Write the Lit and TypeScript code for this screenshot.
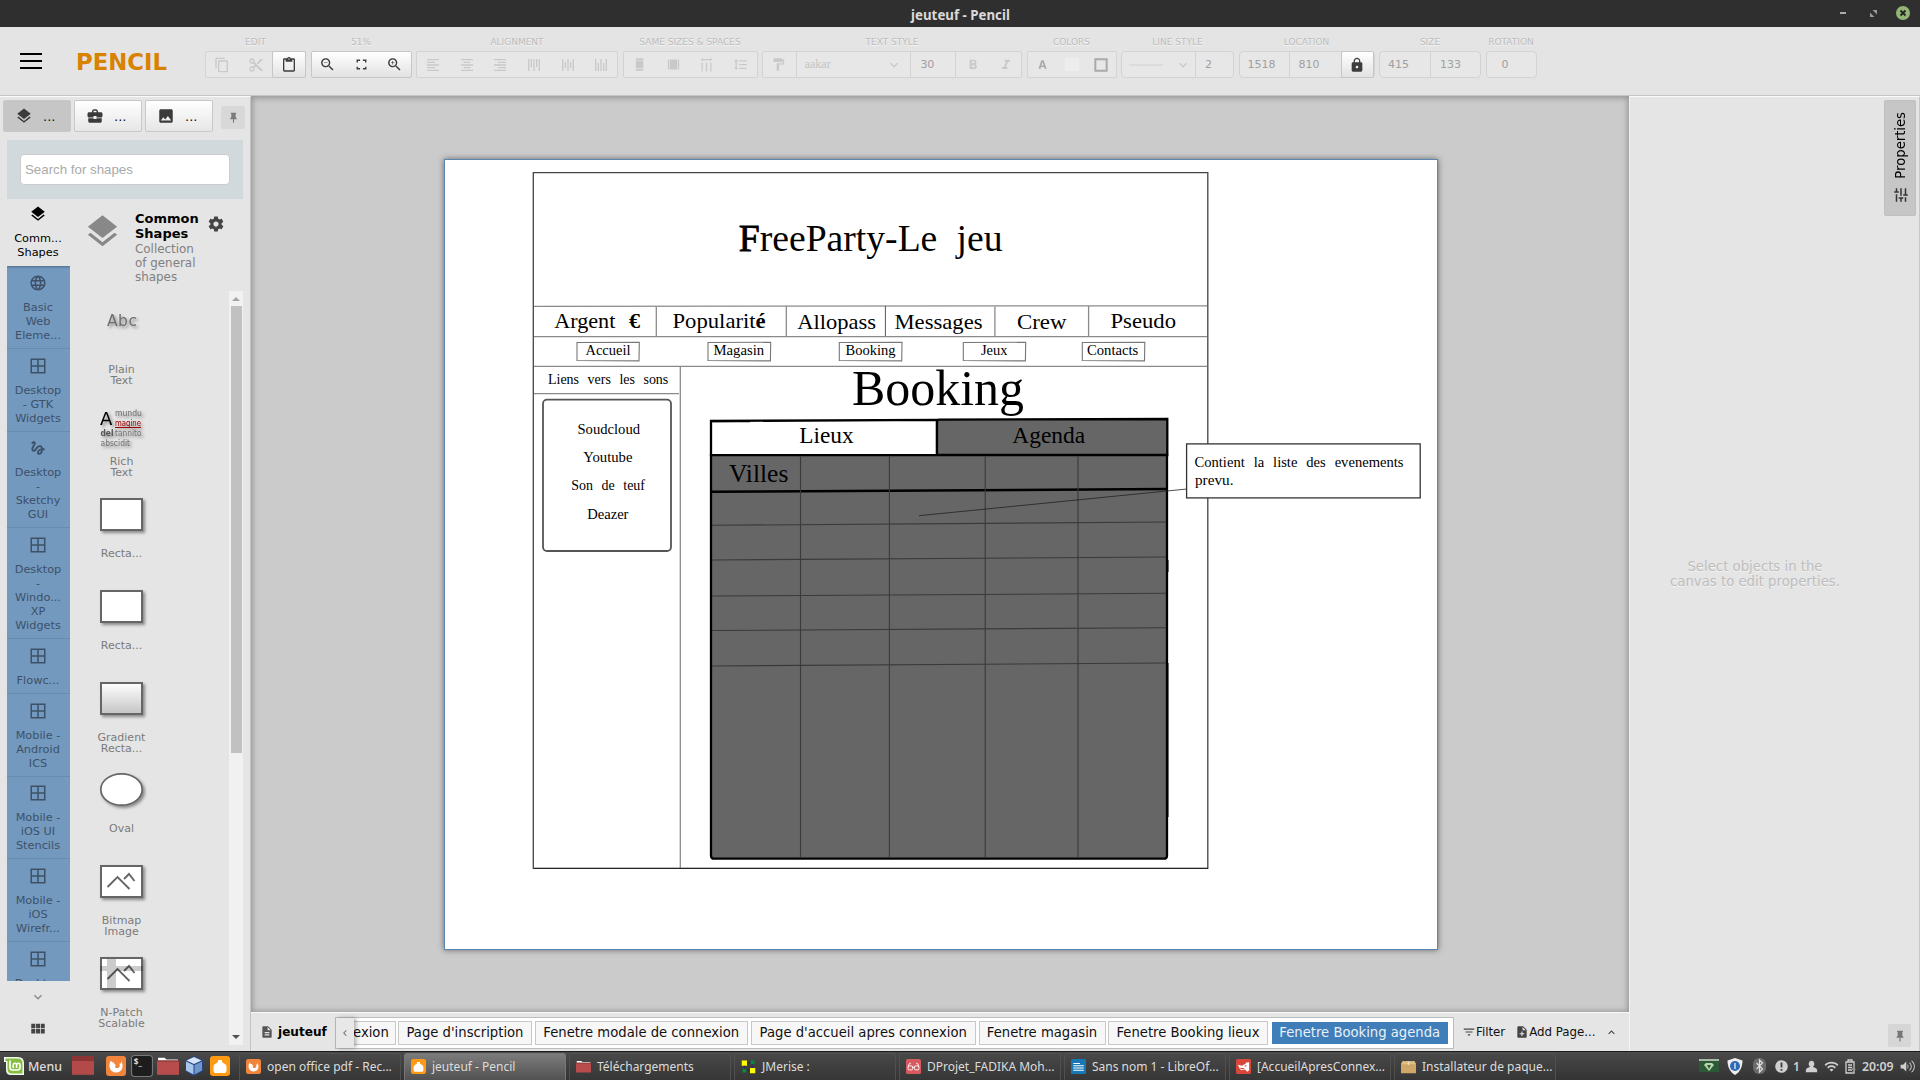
import { LitElement, html, svg, css } from "lit";
import { customElement } from "lit/decorators.js";

const P: Record<string, string> = {
  layers: "M11.99 18.54l-7.37-5.73L3 14.07l9 7 9-7-1.63-1.27-7.38 5.74zM12 16l7.36-5.73L21 9l-9-7-9 7 1.63 1.27L12 16z",
  copy: "M16 1H4c-1.1 0-2 .9-2 2v14h2V3h12V1zm3 4H8c-1.1 0-2 .9-2 2v14c0 1.1.9 2 2 2h11c1.1 0 2-.9 2-2V7c0-1.1-.9-2-2-2zm0 16H8V7h11v14z",
  cut: "M9.64 7.64c.23-.5.36-1.05.36-1.64 0-2.21-1.79-4-4-4S2 3.79 2 6s1.79 4 4 4c.59 0 1.14-.13 1.64-.36L10 12l-2.36 2.36C7.14 14.13 6.59 14 6 14c-2.21 0-4 1.79-4 4s1.79 4 4 4 4-1.79 4-4c0-.59-.13-1.14-.36-1.64L12 14l7 7h3v-1L9.64 7.64zM6 8c-1.1 0-2-.89-2-2s.9-2 2-2 2 .89 2 2-.9 2-2 2zm0 12c-1.1 0-2-.89-2-2s.9-2 2-2 2 .89 2 2-.9 2-2 2zm6-7.500c-.28 0-.5-.22-.5-.5s.22-.5.5-.5.5.22.5.5-.22.5-.5.5zM19 3l-6 6 2 2 7-7V3z",
  paste: "M19 2h-4.18C14.400.84 13.300 0 12 0c-1.300 0-2.400.84-2.820 2H5c-1.100 0-2 .9-2 2v16c0 1.100.9 2 2 2h14c1.100 0 2-.9 2-2V4c0-1.100-.9-2-2-2zm-7 0c.55 0 1 .45 1 1s-.45 1-1 1-1-.45-1-1 .45-1 1-1zm7 18H5V4h2v3h10V4h2v16z",
  zoomOut: "M15.500 14h-.79l-.28-.27C15.410 12.590 16 11.110 16 9.500 16 5.910 13.090 3 9.500 3S3 5.910 3 9.500 5.910 16 9.500 16c1.610 0 3.090-.59 4.230-1.570l.27.28v.79l5 4.990L20.490 19l-4.990-5zm-6 0C7.010 14 5 11.990 5 9.500S7.010 5 9.500 5 14 7.010 14 9.500 11.990 14 9.500 14zM7 9h5v1H7z",
  zoomIn: "M15.500 14h-.79l-.28-.27C15.410 12.590 16 11.110 16 9.500 16 5.910 13.090 3 9.500 3S3 5.910 3 9.500 5.910 16 9.500 16c1.610 0 3.090-.59 4.230-1.570l.27.28v.79l5 4.990L20.490 19l-4.990-5zm-6 0C7.010 14 5 11.990 5 9.500S7.010 5 9.500 5 14 7.010 14 9.500 11.990 14 9.500 14zM12 10h-2v2H9v-2H7V9h2V7h1v2h2v1z",
  fit: "M5 9V5h5v2H7v2zM14 5h5v4h-2V7h-3zM5 15h2v2h3v2H5zM17 15h2v4h-5v-2h3zM5 10h0z",
  alignL: "M3 3h18v2H3zM3 7h12v2H3zM3 11h18v2H3zM3 15h12v2H3zM3 19h18v2H3z",
  alignC: "M3 3h18v2H3zM7 7h10v2H7zM3 11h18v2H3zM7 15h10v2H7zM3 19h18v2H3z",
  alignR: "M3 3h18v2H3zM9 7h12v2H9zM3 11h18v2H3zM9 15h12v2H9zM3 19h18v2H3z",
  alignT: "M3 3h2v18H3zM7 3h2v12H7zM11 3h2v18h-2zM15 3h2v12h-2zM19 3h2v18h-2z",
  alignM: "M3 3h2v18H3zM7 7h2v10H7zM11 3h2v18h-2zM15 7h2v10h-2zM19 3h2v18h-2z",
  alignB: "M3 3h2v18H3zM7 9h2v12H7zM11 3h2v18h-2zM15 9h2v12h-2zM19 3h2v18h-2z",
  sameW: "M6 2h12v3H6zM6 6h12v12H6zM6 19h12v3H6z",
  sameH: "M3 4h2v16H3zM6 4h12v16H6zM19 4h2v16h-2z",
  spH: "M3 4l3-3v2h12V1l3 3-3 3V5H6v2zM4 9h2v14H4zM11 9h2v14h-2zM18 9h2v14h-2z",
  spV: "M6 7h2.500L5 3.500 1.500 7H4v10H1.500L5 20.500 8.500 17H6V7zm4-2v2h12V5H10zm0 14h12v-2H10v2zm0-6h12v-2H10v2z",
  brush: "M18 4V3c0-.55-.45-1-1-1H5c-.55 0-1 .45-1 1v4c0 .55.45 1 1 1h12c.55 0 1-.45 1-1V6h1v4H9v11c0 .55.45 1 1 1h2c.55 0 1-.45 1-1v-9h8V4h-3z",
  bold: "M15.600 10.790c.97-.67 1.650-1.770 1.650-2.790 0-2.260-1.750-4-4-4H7v14h7.040c2.090 0 3.710-1.700 3.710-3.790 0-1.520-.86-2.820-2.150-3.420zM10 6.500h3c.83 0 1.500.67 1.500 1.500s-.67 1.500-1.500 1.500h-3v-3zm3.500 9H10v-3h3.500c.83 0 1.500.67 1.500 1.500s-.67 1.500-1.500 1.500z",
  italic: "M10 4v3h2.210l-3.420 8H6v3h8v-3h-2.210l3.420-8H18V4z",
  chev: "M7.410 8.590L12 13.170l4.590-4.580L18 10l-6 6-6-6z",
  lock: "M18 8h-1V6c0-2.760-2.240-5-5-5S7 3.240 7 6v2H6c-1.100 0-2 .9-2 2v10c0 1.100.9 2 2 2h12c1.100 0 2-.9 2-2V10c0-1.100-.9-2-2-2zm-6 9c-1.100 0-2-.9-2-2s.9-2 2-2 2 .9 2 2-.9 2-2 2zm3.100-9H8.900V6c0-1.710 1.390-3.100 3.100-3.100 1.710 0 3.100 1.390 3.100 3.100v2z",
  brief: "M10 16v-1H3.010L3 19c0 1.110.89 2 2 2h14c1.110 0 2-.89 2-2v-4h-7v1h-4zm10-9h-4.010V5l-2-2h-4l-2 2v2H4c-1.100 0-2 .9-2 2v3c0 1.110.89 2 2 2h6v-2h4v2h6c1.100 0 2-.9 2-2V9c0-1.100-.9-2-2-2zm-6 0h-4V5h4v2z",
  image: "M21 19V5c0-1.100-.9-2-2-2H5c-1.100 0-2 .9-2 2v14c0 1.100.9 2 2 2h14c1.100 0 2-.9 2-2zM8.500 13.500l2.500 3.010L14.500 12l4.500 6H5l3.500-4.500z",
  pin: "M7 3h10v2h-1v6l2 3v1h-5v6l-1 1-1-1v-6H6v-1l2-3V5H7z",
  globe: "M11.990 2C6.470 2 2 6.480 2 12s4.470 10 9.990 10C17.520 22 22 17.520 22 12S17.520 2 11.990 2zm6.930 6h-2.950c-.32-1.250-.78-2.450-1.380-3.560 1.840.63 3.370 1.910 4.330 3.560zM12 4.040c.83 1.200 1.480 2.530 1.910 3.960h-3.820c.43-1.430 1.080-2.760 1.910-3.960zM4.260 14C4.100 13.360 4 12.690 4 12s.1-1.360.26-2h3.380c-.08.66-.14 1.320-.14 2s.06 1.340.14 2H4.260zm.82 2h2.950c.32 1.250.78 2.450 1.380 3.560-1.840-.63-3.370-1.900-4.330-3.560zm2.950-8H5.080c.96-1.660 2.490-2.930 4.330-3.560C8.810 5.550 8.350 6.750 8.030 8zM12 19.960c-.83-1.200-1.480-2.530-1.910-3.960h3.820c-.43 1.430-1.080 2.760-1.910 3.960zM14.340 14H9.660c-.09-.66-.16-1.320-.16-2s.07-1.350.16-2h4.680c.09.65.16 1.320.16 2s-.07 1.340-.16 2zm.25 5.560c.6-1.110 1.060-2.310 1.380-3.560h2.950c-.96 1.650-2.490 2.930-4.330 3.560zM16.360 14c.08-.66.14-1.320.14-2s-.06-1.340-.14-2h3.380c.16.64.26 1.310.26 2s-.1 1.360-.26 2h-3.380z",
  win: "M2 2h20v20H2zM4 4v7h7V4zM13 4v7h7V4zM4 13v7h7v-7zM13 13v7h7v-7z",
  gesture: "M4.590 6.890c.7-.71 1.400-1.350 1.710-1.220.5.2 0 1.030-.3 1.520-.25.42-2.860 3.890-2.860 6.310 0 1.280.48 2.340 1.340 2.980.75.56 1.740.73 2.640.46 1.070-.31 1.950-1.400 3.060-2.770 1.210-1.490 2.830-3.440 4.080-3.440 1.630 0 1.650 1.010 1.760 1.790-3.780.64-5.380 3.670-5.380 5.370 0 1.700 1.440 3.090 3.210 3.090 1.630 0 4.290-1.330 4.690-6.100H21v-2.500h-2.470c-.15-1.650-1.090-4.200-4.030-4.200-2.250 0-4.180 1.910-4.940 2.840-.58.73-2.060 2.480-2.290 2.720-.25.3-.68.84-1.110.84-.45 0-.72-.83-.36-1.920.35-1.090 1.400-2.860 1.850-3.520.78-1.140 1.300-1.920 1.300-3.280C8.950 3.690 7.310 3 6.440 3 5.120 3 3.970 4 3.720 4.250c-.36.36-.66.66-.88.93l1.750 1.710zm9.290 11.660c-.31 0-.74-.26-.74-.72 0-.6.73-2.200 2.870-2.760-.3 2.690-1.430 3.480-2.130 3.480z",
  gear: "M19.430 12.980c.04-.32.07-.64.07-.98s-.03-.66-.07-.98l2.110-1.650c.19-.15.24-.42.12-.64l-2-3.460c-.12-.22-.39-.3-.61-.22l-2.490 1c-.52-.4-1.080-.73-1.690-.98l-.38-2.650C14.460 2.180 14.250 2 14 2h-4c-.25 0-.46.18-.49.42l-.38 2.650c-.61.25-1.170.59-1.690.98l-2.490-1c-.23-.09-.49 0-.61.22l-2 3.460c-.13.22-.07.49.12.64l2.110 1.650c-.04.32-.07.65-.07.98s.03.66.07.98l-2.110 1.650c-.19.15-.24.42-.12.64l2 3.460c.12.22.39.3.61.22l2.490-1c.52.4 1.080.73 1.690.98l.38 2.650c.03.24.24.42.49.42h4c.25 0 .46-.18.49-.42l.38-2.650c.61-.25 1.170-.59 1.690-.98l2.490 1c.23.09.49 0 .61-.22l2-3.460c.12-.22.07-.49-.12-.64l-2.110-1.650zM12 15.500c-1.930 0-3.500-1.570-3.500-3.500s1.570-3.500 3.500-3.500 3.500 1.570 3.500 3.500-1.570 3.500-3.500 3.500z",
  grid: "M3 5h5.400v6H3zM9.400 5h5.300v6H9.400zM15.700 5H21v6h-5.300zM3 12h5.400v6H3zM9.400 12h5.300v6H9.400zM15.700 12H21v6h-5.300z",
  doc: "M14 2H6c-1.100 0-2 .9-2 2v16c0 1.100.9 2 2 2h12c1.100 0 2-.9 2-2V8l-6-6zm2 16H8v-2h8v2zm0-4H8v-2h8v2zm-3-5V3.500L18.500 9H13z",
  addDoc: "M14 2H6c-1.100 0-2 .9-2 2v16c0 1.100.9 2 2 2h12c1.100 0 2-.9 2-2V8l-6-6zm2 14h-3v3h-2v-3H8v-2h3v-3h2v3h3v2zm-3-7V3.500L18.500 9H13z",
  filter: "M10 18h4v-2h-4v2zM3 6v2h18V6H3zm3 7h12v-2H6v2z",
  tune: "M3 17v2h6v-2H3zM3 5v2h10V5H3zm10 16v-2h8v-2h-8v-2h-2v6h2zM7 9v2H3v2h4v2h2V9H7zm14 4v-2H11v2h10zm-6-4h2V7h4V5h-4V3h-2v6z",
  textA: "M9.900 4h4.200L19.500 20h-3.700l-1-3.400H9.200L8.200 20H4.500zM10 13.800h4L12 7.300z",
  border: "M2 2h20v20H2zM5 5v14h14V5z",
  user: "M12 3a4.500 5 0 0 1 2.500 9.200c1 1 5.500 1.500 6.500 4.800V21H3v-4c1-3.300 5.500-3.800 6.500-4.800A4.500 5 0 0 1 12 3z",
  wifi: "M1 9l2 2c4.970-4.970 13.030-4.970 18 0l2-2C16.930 2.930 7.080 2.930 1 9zm8 8l3 3 3-3c-1.650-1.660-4.340-1.660-6 0zm-4-4l2 2c2.760-2.760 7.240-2.760 10 0l2-2C15.140 9.140 8.870 9.140 5 13z",
  vol: "M1 9v6h4l5 5V4L5 9zM12 8v8c2-1.600 2-6.400 0-8zM15 5v2c3 2 3 8 0 10v2c5-3 5-11 0-14zM18.500 2v2c5 3.500 5 12.500 0 16v2c7-4.500 7-15.500 0-20z",
};

const ic = (name: string, size = 18, cls = "") =>
  html`<svg class="ic ${cls}" width=${size} height=${size} viewBox="0 0 24 24"><path fill="currentColor" fill-rule="evenodd" d=${P[name]}></path></svg>`;

const base = css`
  * { box-sizing: border-box; }
  svg { display: block; flex: none; }
`;

@customElement("tool-bar")
class ToolBar extends LitElement {
  static styles = [base, css`
    :host { display: flex; height: 69px; background: #e4e4e4; border-bottom: 1px solid #c6c6c6; font: 11px "DejaVu Sans", sans-serif; color: #a0a0a0; padding-top: 9px; }
    .burger { width: 22px; margin: 17px 0 0 20px; height: 16px; display: flex; flex-direction: column; justify-content: space-between; }
    .burger i { height: 2px; background: #000; }
    .logo { width: 129px; margin-left: 34px; padding-top: 12px; font-size: 22.8px; font-weight: bold; line-height: 28px; color: #d98200; }
    .groups { display: flex; gap: 4.5px; }
    .g { display: flex; flex-direction: column; }
    .lb { font-size: 9px; height: 15px; line-height: 12px; text-align: center; color: #bcbcbc; white-space: nowrap; text-shadow: 0 1px #f4f4f4; }
    .bx { height: 27px; border: 1px solid #d3d3d3; border-radius: 2px; background: #e7e7e7; display: flex; }
    .bx.r { border-radius: 4px; }
    .c { display: flex; align-items: center; justify-content: center; color: #c9c9c9; flex: none; }
    .c:first-child { margin-left: -1px; }
    .c.sep { border-left: 1px solid #d3d3d3; }
    .c.in { color: #a0a0a0; justify-content: flex-start; padding-left: 9px; }
    .on { background: linear-gradient(#fff, #e2e2e2); color: #3d3d3d; border-color: #c6c6c6; }
    .c.on { color: #3d3d3d; margin: -1px; border: 1px solid #c6c6c6; border-radius: 2px; }
    .on .c { color: #3d3d3d; }
    .w33 { width: 33.7px; }
    .font { font: 12px "Liberation Serif", serif; width: 81px; padding-left: 8px; color: #c3c3c3; justify-content: flex-start; }
    .mid { color: #a9a9a9; }
    .sw { width: 14px; height: 13px; background: #ededed; }
    .line { width: 34px; height: 2px; background: #dcdcdc; }
  `];
  private g(w: number, label: string, body: unknown, cls = "") {
    return html`<div class="g" style="width:${w}px"><div class="lb">${label}</div><div class="bx ${cls}">${body}</div></div>`;
  }
  private icons(names: string[], size = 18) {
    return names.map((n) => html`<div class="c w33">${ic(n, size)}</div>`);
  }
  private num(v: string, w: number, cls = "") {
    return html`<div class="c in ${cls}" style="width:${w}px">${v}</div>`;
  }
  render() {
    return html`
      <div class="burger"><i></i><i></i><i></i></div>
      <div class="logo">PENCIL</div>
      <div class="groups">
        ${this.g(101, "EDIT", html`${this.icons(["copy", "cut"], 16)}<div class="c on w33" style="margin-left:0">${ic("paste", 16)}</div>`)}
        ${this.g(101, "51%", this.icons(["zoomOut", "fit", "zoomIn"], 17), "on")}
        ${this.g(202, "ALIGNMENT", this.icons(["alignL", "alignC", "alignR", "alignT", "alignM", "alignB"], 16))}
        ${this.g(135, "SAME SIZES & SPACES", this.icons(["sameW", "sameH", "spH", "spV"], 15))}
        ${this.g(260, "TEXT STYLE", html`
          <div class="c w33">${ic("brush", 15)}</div>
          <div class="c sep font">aakar</div>
          <div class="c w33">${ic("chev", 16)}</div>
          ${this.num("30", 45, "sep")}
          <div class="c sep w33">${ic("bold", 16)}</div>
          <div class="c w33">${ic("italic", 16)}</div>`)}
        ${this.g(90, "COLORS", html`
          <div class="c mid" style="width:31px">${ic("textA", 13)}</div>
          <div class="c" style="width:29px"><div class="sw"></div></div>
          <div class="c mid" style="width:29px">${ic("border", 16)}</div>`)}
        ${this.g(113, "LINE STYLE", html`
          <div class="c" style="width:50px"><div class="line"></div></div>
          <div class="c" style="width:24px">${ic("chev", 16)}</div>
          ${this.num("2", 37, "sep")}`, "r")}
        ${this.g(136, "LOCATION", html`${this.num("1518", 50)}${this.num("810", 52, "sep")}<div class="c on w33" style="margin-left:0">${ic("lock", 16)}</div>`, "r")}
        ${this.g(102, "SIZE", html`${this.num("415", 51)}${this.num("133", 50, "sep")}`, "r")}
        ${this.g(51, "ROTATION", html`<div class="c" style="width:39px;color:#a0a0a0">0</div>`, "r")}
      </div>`;
  }
}

@customElement("shape-panel")
class ShapePanel extends LitElement {
  static styles = [base, css`
    :host { display: flex; flex-direction: column; width: 251px; height: 955px; background: #e5e5e5; border-top: 1px solid #fafafa; border-right: 1px solid #c4c4c4; font-family: "DejaVu Sans", sans-serif; }
    .tabs { display: flex; padding: 3px 0 0 3px; gap: 3px; height: 43px; }
    .tab { width: 68px; height: 32px; border: 1px solid #c8c8c8; border-radius: 2px; background: linear-gradient(#fff, #e6e6e6); display: flex; align-items: center; padding-left: 11px; gap: 10px; color: #3b3b3b; font-size: 13px; }
    .tab.sel { background: #c6c6c6; }
    .tab span { color: #111; }
    .pin { width: 24px; height: 23px; margin: 6px 0 0 5px; background: #d8d8d8; border-radius: 2px; color: #7a7a7a; display: flex; align-items: center; justify-content: center; }
    .search { height: 59px; margin: 0 7px; background: #d2d9dc; padding: 14px 14px 14px 13px; }
    .inp { height: 31px; background: #fff; border: 1px solid #ccc; border-radius: 4px; font: 13.3px/29px "Liberation Sans", sans-serif; color: #aaa; padding-left: 4px; width: 210px; }
    .body { display: flex; flex: 1; padding: 0 7px; min-height: 0; }
    .left { width: 63px; display: flex; flex-direction: column; }
    .list { height: 782px; overflow: hidden; background: #7399bf; }
    .it { display: flex; flex-direction: column; align-items: center; gap: 9px; padding: 7.75px 1px 5px 0; border-bottom: 1px solid #688bb0; font-size: 11.3px; line-height: 14px; text-align: center; color: #3d5168; white-space: nowrap; }
    .it.sel { background: #e5e5e5; color: #000; padding: 6px 1px 6px 0; border: 0; box-shadow: 0 1px 2px #4d6a88; }
    .foot { display: flex; flex-direction: column; align-items: center; color: #444; padding: 8px 1px 0 0; gap: 15px; }
    .dim { color: #8a8a8a; }
    .right { flex: 1; display: flex; flex-direction: column; }
    .head { display: flex; height: 92px; padding: 12px 0 0 13px; }
    .big { color: #888; margin-top: 1px; }
    .ttl { width: 69px; margin-left: 13px; font-size: 11.9px; line-height: 14px; color: #808080; white-space: nowrap; }
    .ttl b { display: block; font-size: 13px; line-height: 15px; color: #000; margin-bottom: 1px; }
    .gear { color: #444; margin: 4px 0 0 2.5px; }
    .row { display: flex; height: 754px; }
    .items { width: 159px; padding: 23px 0 0 22px; overflow: hidden; }
    .s { width: 59px; height: 91.9px; display: flex; flex-direction: column; align-items: center; gap: 17px; font-size: 11px; line-height: 11px; text-align: center; color: #7b7b7b; white-space: nowrap; }
    .th { overflow: visible; }
    .bar { width: 14px; background: #f1f1f1; display: flex; flex-direction: column; align-items: center; justify-content: space-between; padding-top: 6px; }
    .knob { width: 11px; height: 447px; background: #c1c1c1; margin: 5px 0 auto; }
    .up { border: 4px solid transparent; border-top: 0; border-bottom: 4px solid #a3a3a3; }
    .dn { border: 4px solid transparent; border-bottom: 0; border-top: 4px solid #505050; margin-bottom: 6px; }
  `];
  private thumb(k: string) {
    const f = "drop-shadow(2px 2px 1.5px rgba(0,0,0,.4))";
    const t = (x: number, y: number, w: number, s: string, c = "#707070", fw = "normal") =>
      svg`<text x=${x} y=${y} font-size="8.800" fill=${c} font-weight=${fw} textLength=${w} lengthAdjust="spacingAndGlyphs">${s}</text>`;
    let b: unknown;
    if (k === "abc") b = svg`<text x="7" y="11.500" font-size="15.500" fill="#6e6e6e" textLength="30">Abc</text>`;
    else if (k === "rich") b = svg`
      <text x="0" y="18.500" font-size="18" fill="#000">A</text>
      ${t(15, 9.5, 27, "mundu")}${t(15, 19.5, 26, "magine", "#a00000")}
      <rect x="15" y="21" width="26" height="1" fill="#a00000"></rect>
      ${t(0.5, 29.5, 13, "del", "#555", "bold")}${t(15, 29.5, 26.5, "tannito")}${t(0.5, 39.5, 29.5, "abscidit")}`;
    else if (k === "oval") b = svg`<ellipse cx="21.500" cy="16.500" rx="20.700" ry="15.700" fill="#fff" stroke="#666" stroke-width="1.700"></ellipse>`;
    else b = svg`<rect x="1" y="1" width="41" height="31" fill=${k === "grad" ? "url(#gr)" : "#fff"} stroke="#666" stroke-width="2"></rect>
      ${k === "img" || k === "np" ? svg`<path d="M7.500 22L17.500 12l12 12M24 14l5-5 5.500 7" fill="none" stroke="#666" stroke-width="1.900"></path>` : ""}
      ${k === "np" ? svg`<path d="M7 2h9v29H7zM0 9h43v5H0z" fill="#000" fill-opacity=".2"></path>` : ""}`;
    return html`<svg class="th" width="43" height="33" style="filter:${f}"><defs><linearGradient id="gr" x2="0" y2="1"><stop stop-color="#fff"></stop><stop offset="1" stop-color="#c4c4c4"></stop></linearGradient></defs>${b}</svg>`;
  }
  render() {
    const cols: [string, string[]][] = [
      ["globe", ["Basic", "Web", "Eleme..."]], ["win", ["Desktop", "- GTK", "Widgets"]],
      ["gesture", ["Desktop", "-", "Sketchy", "GUI"]], ["win", ["Desktop", "-", "Windo...", "XP", "Widgets"]],
      ["win", ["Flowc..."]], ["win", ["Mobile -", "Android", "ICS"]], ["win", ["Mobile -", "iOS UI", "Stencils"]],
      ["win", ["Mobile -", "iOS", "Wirefr..."]], ["win", ["Desktop"]],
    ];
    const shapes: [string, string[]][] = [
      ["abc", ["Plain", "Text"]], ["rich", ["Rich", "Text"]], ["rect", ["Recta..."]], ["rect", ["Recta..."]],
      ["grad", ["Gradient", "Recta..."]], ["oval", ["Oval"]], ["img", ["Bitmap", "Image"]], ["np", ["N-Patch", "Scalable"]],
    ];
    const lines = (a: string[]) => html`<div>${a.map((l) => html`<div>${l}</div>`)}</div>`;
    return html`
      <div class="tabs">
        <div class="tab sel">${ic("layers")}<span>...</span></div>
        <div class="tab">${ic("brief")}<span>...</span></div>
        <div class="tab">${ic("image")}<span>...</span></div>
        <div class="pin">${ic("pin", 13)}</div>
      </div>
      <div class="search"><div class="inp">Search for shapes</div></div>
      <div class="body">
        <div class="left">
          <div class="list">
            <div class="it sel">${ic("layers", 18)}${lines(["Comm...", "Shapes"])}</div>
            ${cols.map(([i, l]) => html`<div class="it">${ic(i, 18)}${lines(l)}</div>`)}
          </div>
          <div class="foot">${ic("chev", 16, "dim")}${ic("grid", 18)}</div>
        </div>
        <div class="right">
          <div class="head">
            ${ic("layers", 39, "big")}
            <div class="ttl"><b>Common<br>Shapes</b>Collection<br>of general<br>shapes</div>
            ${ic("gear", 18, "gear")}
          </div>
          <div class="row">
            <div class="items">${shapes.map(([k, l]) => html`<div class="s">${this.thumb(k)}${lines(l)}</div>`)}</div>
            <div class="bar"><i class="up"></i><i class="knob"></i><i class="dn"></i></div>
          </div>
        </div>
      </div>`;
  }
}

interface Label { s: string; x: number; e: number; y: number; f: number; b?: string; a?: string; }

@customElement("mockup-canvas")
class MockupCanvas extends LitElement {
  static styles = [base, css`
    :host { display: block; height: 916px; background: #cbcbcb; box-shadow: inset 0 4px 6px -2px #999, inset 4px 0 6px -3px #999, inset -4px 0 6px -3px #999, inset 0 -4px 6px -4px #999; padding: 63px 0 0 193px; }
    .page { width: 994px; height: 791px; background: #fff; border: 1px solid #5b88b2; box-shadow: 0 0 6px rgba(0,0,0,.5); }
    .art { margin: -1px; }
    text { font-family: "Liberation Serif", serif; fill: #000; white-space: pre; }
    .heavy { stroke: #000; stroke-width: .8px; }
  `];
  render() {
    // Word gaps in the mockup's typeface are about twice as wide as usual.
    const labels: Label[] = [
      { s: "reeParty-Le jeu", b: "F", x: 738.8, e: 1002.5, y: 251.3, f: 37 },
      { s: "Argent ", a: "€", x: 554.2, e: 640, y: 327.7, f: 22 },
      { s: "Popularit", a: "é", x: 672.500, e: 765.7, y: 327.7, f: 22 },
      { s: "Allopass", x: 797.2, e: 876, y: 329.200, f: 22 },
      { s: "Messages", x: 894.5, e: 982.5, y: 329.200, f: 22 },
      { s: "Crew", x: 1017, e: 1066.5, y: 329.200, f: 22 },
      { s: "Pseudo", x: 1110.5, e: 1176, y: 327.9, f: 22 },
      { s: "Accueil", x: 585.5, e: 630.5, y: 355, f: 14.2 },
      { s: "Magasin", x: 713.500, e: 764.2, y: 355, f: 14.2 },
      { s: "Booking", x: 845.5, e: 895.500, y: 355, f: 14.2 },
      { s: "Jeux", x: 981, e: 1007.5, y: 355, f: 14.2 },
      { s: "Contacts", x: 1087, e: 1138.200, y: 355, f: 14.2 },
      { s: "Liens vers les sons", x: 548, e: 668.300, y: 384, f: 14.2 },
      { s: "Soudcloud", x: 577.5, e: 640, y: 434, f: 14.2 },
      { s: "Youtube", x: 583.3, e: 632.500, y: 462, f: 14.2 },
      { s: "Son de teuf", x: 571.300, e: 645, y: 490, f: 14.2 },
      { s: "Deazer", x: 587.2, e: 628.500, y: 519, f: 14.2 },
      { s: "Booking", x: 852, e: 1024, y: 405.200, f: 50 },
      { s: "Lieux", x: 799.3, e: 853.700, y: 443.2, f: 23.5 },
      { s: "Agenda", x: 1012.300, e: 1085.200, y: 442.5, f: 23.5 },
      { s: "Villes", x: 729, e: 788.300, y: 481.9, f: 24.5 },
      { s: "Contient la liste des evenements", x: 1194.500, e: 1403.500, y: 467, f: 14.7 },
      { s: "prevu.", x: 1195, e: 1233.500, y: 484.5, f: 14.7 },
    ];
    const btn = [[577, 639.3], [708, 770.7], [839.3, 902], [963.3, 1025.7], [1082.3, 1144.8]];
    const rows = [[525.3, 522], [560, 557], [596, 593.3], [630.5, 627.7], [666, 663]];
    return html`<div class="page"><svg class="art" width="994" height="791" viewBox="444 159 994 791">
      <g fill="none" stroke="#444" stroke-width="1.300">
        <path d="M533.3 172.700H1207.8V868.300H533.300z"></path>
      </g>
      <g fill="none" stroke="#8a8a8a" stroke-width="1.300">
        <path d="M534 306.300L1207 305.800M534 336.600H1207M534 366.400H1207M656.300 306V336.500M786.300 306V336.500M994.900 306V336.500M1088.600 306V336.500M680.300 366V868M534 393.700H679"></path>
        ${btn.map(([a, b]) => svg`<path d="M${a} 342.500L${b} 342.300L${b - 0.3} 360.900L${a} 360.500z" stroke="#777" stroke-width="1.100"></path>`)}
      </g>
      <path d="M885.400 306V336" stroke="#555" stroke-width="1"></path>
      <path d="M534 868.400H1208" stroke="#222" stroke-width="1"></path>
      <rect x="543" y="399.700" width="128" height="151.300" rx="4" fill="none" stroke="#555" stroke-width="1.800"></rect>
      <path d="M711 456V421L937 419.800V455" fill="#fff" stroke="#000" stroke-width="2.300"></path>
      <path d="M937 455V420.500L939 419.600L1167.300 419V455z" fill="#666" stroke="#000" stroke-width="2.300"></path>
      <path d="M711 455.200H1167V855.700q0 3-3 3H714q-3 0-3-3z" fill="#666" stroke="#000" stroke-width="2.300"></path>
      <path d="M1168 560V572M1168 663V817M710.500 700V835" stroke="#000" stroke-width="1"></path>
      <path d="M712 491.700L1167 489" stroke="#000" stroke-width="2.500"></path>
      <path d="M712.500 421.600L750 421.600" stroke="#000" stroke-width="1.500"></path>
      <g stroke="#3a3a3a" stroke-width="1.100">
        ${rows.map(([a, b]) => svg`<path d="M712 ${a}L1166 ${b}"></path>`)}
        ${[800.5, 889.4, 985.2, 1078].map((x) => svg`<path d="M${x} 456.500V857.500"></path>`)}
      </g>
      <path d="M919 515.700L1187 489" stroke="#222" stroke-width=".8"></path>
      <rect x="1186.600" y="443.900" width="233.600" height="54" fill="#fff" stroke="#333" stroke-width="1.300"></rect>
      ${labels.map((l) => svg`<text x=${l.x} y=${l.y} font-size=${l.f} word-spacing=${l.f * (l.f === 37 ? 0.26 : 0.36)} textLength=${l.e - l.x} lengthAdjust="spacingAndGlyphs">${l.b ? svg`<tspan class="heavy">${l.b}</tspan>` : ""}${l.s}${l.a ? svg`<tspan font-weight="bold">${l.a}</tspan>` : ""}</text>`)}
    </svg></div>`;
  }
}

@customElement("page-bar")
class PageBar extends LitElement {
  static styles = [base, css`
    :host { display: flex; height: 39px; background: #e5e5e5; border-top: 1px solid #fafafa; font: 13.2px "DejaVu Sans", sans-serif; color: #111; }
    .doc { width: 84px; padding-left: 9px; display: flex; align-items: center; gap: 4px; color: #555; }
    .doc b { font-size: 12.1px; color: #000; }
    .strip { width: 1119px; height: 32px; margin-top: 4px; border: 1px solid #bdbdbd; background: #fff; display: flex; }
    .back { width: 18px; background: #e8e8e8; box-shadow: 2px 0 4px rgba(0,0,0,.3); color: #777; display: flex; align-items: center; justify-content: center; z-index: 1; }
    .tabs { display: flex; gap: 2.500px; padding-top: 3px; overflow: hidden; margin-left: -1px; }
    .t { height: 24px; line-height: 22px; border: 1px solid #c8c8c8; background: #f7f7f7; text-align: center; white-space: nowrap; }
    .t.cut { border-left: 0; text-align: left; }
    .t.sel { margin: 1px 0 0 1.500px; height: 22px; line-height: 20px; background: #3f7eb8; border-color: #3f7eb8; color: #e8f0f8; }
    .cmd { display: flex; align-items: center; font-size: 11.85px; padding: 0 0 0 8px; letter-spacing: -.03px; }
    .cmd .ic { color: #444; }
    .gap { width: 10px; }
    .l { transform: rotate(90deg); }
    .u { transform: rotate(180deg); margin-left: 9px; }
  `];
  render() {
    const t: [string, number][] = [["exion", 42.5], ["Page d'inscription", 134], ["Fenetre modale de connexion", 213.5], ["Page d'accueil apres connexion", 225.5], ["Fenetre magasin", 127], ["Fenetre Booking lieux", 160], ["Fenetre Booking agenda", 175.5]];
    return html`
      <div class="doc">${ic("doc", 14)}<b>jeuteuf</b></div>
      <div class="strip">
        <div class="back">${ic("chev", 12, "l")}</div>
        <div class="tabs">${t.map(([n, w], i) => html`<div class="t ${i === 0 ? "cut" : i === 6 ? "sel" : ""}" style="width:${w}px">${n}</div>`)}</div>
      </div>
      <div class="cmd">${ic("filter", 14)}Filter<span class="gap"></span>${ic("addDoc", 14)}Add Page...${ic("chev", 13, "u")}</div>`;
  }
}

@customElement("props-panel")
class PropsPanel extends LitElement {
  static styles = [base, css`
    :host { display: flex; width: 291px; height: 955px; background: #e5e5e5; border-top: 1px solid #fafafa; border-left: 1px solid #f4f4f4; border-right: 1px solid #c8c8c8; font-family: "DejaVu Sans", sans-serif; }
    .msg { width: 250px; padding-top: 462px; text-align: center; font-size: 13.25px; line-height: 15px; color: #bdbdbd; text-shadow: 0 1px #f2f2f2; white-space: nowrap; }
    .side { display: flex; flex-direction: column; justify-content: space-between; padding: 3px 0 4px 4px; }
    .tab { width: 32px; height: 116px; background: #c6c6c6; border: 1px solid #bfbfbf; border-radius: 2px; display: flex; flex-direction: column; align-items: center; padding: 11px 0 0 1px; gap: 7px; color: #333; }
    .v { writing-mode: vertical-rl; transform: rotate(180deg); font-size: 13.2px; line-height: 16px; color: #000; }
    .tab .ic { transform: rotate(-90deg); }
    .pin { width: 23px; height: 23px; margin-left: 4px; background: #d6d6d6; border-radius: 2px; color: #777; display: flex; align-items: center; justify-content: center; }
  `];
  render() {
    return html`<div class="msg">Select objects in the<br>canvas to edit properties.</div>
      <div class="side"><div class="tab"><div class="v">Properties</div>${ic("tune", 18)}</div><div class="pin">${ic("pin", 14)}</div></div>`;
  }
}

const fox = svg`<rect width="20" height="20" rx="3" fill="#f0853b"></rect><path d="M5 4.500C2 8 3 16.500 10 16.500S18 9 15 5C15.500 7 14.500 8.500 13 7.500c2 2.500 0 5-2.500 4.500-2-.4-2-2.500 0-3C9 9 8 8 8 6.500 6.500 6.500 5.500 6 5 4.500z" fill="#fff"></path>`;
const pen = svg`<rect width="20" height="20" rx="3" fill="#ff9a14"></rect><path d="M8 4h4v2l3.500 2.500q1 .8 1 2V15a2 2 0 0 1-2 2h-9a2 2 0 0 1-2-2v-4.500q0-1.200 1-2L8 6z" fill="#fff"></path>`;
const folder = svg`<path d="M0 5h20v13H0z" fill="#b84c4c"></path><path d="M1 5V2.500h6L8.500 4H19v1z" fill="#fff"></path><path d="M0 5h20v1H0z" fill="#8b3434"></path>`;
const icons20: Record<string, unknown> = {
  fox, pen, folder,
  mint: svg`<path d="M0 1h14q6 0 6 6v12H7q-5 0-5-5V6H0z" fill="#f2f8ec"></path><path d="M1.500 2.500h12q5 0 5 5v10H8q-4.500 0-4.500-4.500V5h-2z" fill="#86be43"></path><path d="M6 4.500v7q0 2.500 2.500 2.500h5q2.500 0 2.500-2.500V9a1.700 1.700 0 0 0-3.400 0v3M12.600 9a1.700 1.700 0 0 0-3.400 0v3" stroke="#fff" stroke-width="1.600" fill="none"></path>`,
  desk: svg`<path d="M0 1h20v17H0z" fill="#b34a4a"></path><path d="M0 1h20v4.500H0z" fill="#8b3434"></path>`,
  term: svg`<rect x=".5" y=".5" width="19" height="19" rx="3" fill="#1d1d1d" stroke="#777"></rect><text x="2.500" y="9" font-size="7.500" font-weight="bold" fill="#ddd">$_</text>`,
  box: svg`<path d="M10 0l9 4v11l-9 5-9-5V4z" fill="#27447e"></path><path d="M10 1l7.500 3.500L10 8 2.500 4.500z" fill="#d7e4f5"></path><path d="M2 5.500l7.500 3.500v9.500L2 14.500z" fill="#a9c6ea"></path><path d="M18 5.500L10.500 9v9.500l7.500-4z" fill="#6d96cf"></path>`,
  jm: svg`<path d="M1 2h7v7H1zM12 12h7v7h-7z" fill="#ff0"></path><path d="M13 2h5v5h-5zM2 13h5v5H2z" fill="#0a8a3a"></path><path d="M8 5h5M5 9v4M12 15H8M15 7v5" stroke="#226"></path>`,
  pdf: svg`<rect width="20" height="20" rx="2" fill="#d65a60"></rect><path d="M3 10.500q.5-5.500 3.500-5M17 10.500q-.5-5.500-3.500-5M8.500 11h3" stroke="#fff" fill="none" stroke-width="1.200"></path><rect x="2.800" y="9.200" width="6" height="5.300" rx="1.500" stroke="#fff" fill="none" stroke-width="1.200"></rect><rect x="11.200" y="9.200" width="6" height="5.300" rx="1.500" stroke="#fff" fill="none" stroke-width="1.200"></rect>`,
  lo: svg`<rect width="20" height="20" rx="2" fill="#1878b4"></rect><path d="M3 6h9M3 9h14M3 12h14M3 15h14" stroke="#fff" stroke-width="1.500"></path>`,
  gimp: svg`<rect width="20" height="20" rx="2" fill="#d8473c"></rect><path d="M2.500 7.500L8 9l5-3 1.500-2 1.500 1 1.500-1.500V15L15 17l-3-3-5 1-2-2z" fill="#fff"></path><path d="M11.500 9.500l2.500-.5M6 12.500l5 .5" stroke="#d8473c" stroke-width="1.500"></path>`,
  pkg: svg`<path d="M2 3h16l2 4v12H0V7z" fill="#cfa766"></path><path d="M2 3h16l2 4H0z" fill="#dfbd84"></path><path d="M9 3h2v5H9z" fill="#f1dcb3"></path>`,
};
const i20 = (n: string, s: number) => html`<svg width=${s} height=${s} viewBox="0 0 20 20">${icons20[n]}</svg>`;

@customElement("task-bar")
class TaskBar extends LitElement {
  static styles = [base, css`
    :host { display: flex; height: 29px; background: linear-gradient(#4a4a4a, #333); border-top: 1px solid #1c1c1c; font: 12px "Noto Sans", sans-serif; color: #dcdcdc; align-items: center; }
    .menu { width: 72px; padding-left: 4px; display: flex; align-items: center; gap: 4px; }
    .menu span { font-size: 12.4px; font-weight: 500; }
    .quick { display: flex; width: 167px; align-items: center; padding-bottom: 1px; }
    .tasks { display: flex; gap: 3px; align-self: stretch; padding-top: 1px; width: 1454px; }
    .t { width: 162px; display: flex; align-items: center; padding: 0 0 1px 6px; gap: 6px; background: linear-gradient(#484848, #363636); border: 1px solid #505050; border-bottom: 0; border-radius: 3px 3px 0 0; white-space: nowrap; }
    .t.on { background: linear-gradient(#7c7c7c, #515151); border-color: #777; }
    .tray { display: flex; align-items: center; color: #d0d0d0; flex: 1; padding-left: 6px; }
    .tray svg { margin-right: 5px; }
    .one { width: 11px; font-weight: 600; }
    .time { font-weight: 600; font-size: 12.3px; width: 38px; }
  `];
  render() {
    const q: [string, number, number][] = [["desk", 22, 12], ["fox", 20, 5], ["term", 22, 4], ["folder", 22, 5], ["box", 20, 6], ["pen", 20, 0]];
    const t = [["fox", "open office pdf - Rec..."], ["pen", "jeuteuf - Pencil"], ["folder", "Téléchargements"], ["jm", "JMerise :"], ["pdf", "DProjet_FADIKA Moh..."], ["lo", "Sans nom 1 - LibreOf..."], ["gimp", "[AccueilApresConnex..."], ["pkg", "Installateur de paque..."]];
    return html`
      <div class="menu">${i20("mint", 20)}<span>Menu</span></div>
      <div class="quick">${q.map(([n, s, m]) => html`<div style="margin-right:${m}px">${i20(n, s)}</div>`)}</div>
      <div class="tasks">${t.map(([n, s], i) => html`<div class="t ${i === 1 ? "on" : ""}">${i20(n, 15)}<span>${s}</span></div>`)}</div>
      <div class="tray">
        <svg width="20" height="14" viewBox="0 0 20 14" style="margin-right:8px"><path d="M0 1h20v12H0z" fill="#2c5a36"></path><path d="M0 0h20v2H0z" fill="#a9b8a9"></path><path d="M10 12L5 6l2-2h6l2 2z" fill="#b9d5ae"></path><path d="M10 10L8 6h4z" fill="#2c5a36"></path></svg>
        <svg width="16" height="17" viewBox="0 0 16 17" style="margin-right:10px"><path d="M8 0l7.500 2.500C15.500 9 13 14 8 17 3 14 .5 9 .5 2.500z" fill="#eee"></path><circle cx="8" cy="8" r="5" fill="#2f6cb3"></circle><path d="M8 5v6" stroke="#cfe0f5" stroke-width="1.500"></path></svg>
        <svg width="13" height="16" viewBox="0 0 13 16" style="margin-right:9px"><rect width="13" height="16" rx="6" fill="#6b6b6b"></rect><path d="M3.500 5l6 6L6.500 14V2l3 3-6 6" stroke="#e0e0e0" fill="none" stroke-width="1.200"></path></svg>
        <svg width="13" height="13" viewBox="0 0 13 13"><circle cx="6.500" cy="6.500" r="6.300" fill="#d0d0d0"></circle><path d="M6.500 2.500v5M6.500 9v1.800" stroke="#3c3c3c" stroke-width="1.800"></path></svg>
        <span class="one">1</span>
        ${ic("user", 15)}${ic("wifi", 15)}
        <svg width="13" height="15" viewBox="0 0 13 15"><path d="M2 3h8v11H2zM4 1h4v2H4zM4 6h4M4 8.500h4M4 11h4" fill="none" stroke="#d0d0d0" stroke-width="1.300"></path><path d="M10 7l-3 4h2l-1 4 4-5h-2l1-3z" fill="#8d8d8d"></path></svg>
        <span class="time">20:09</span>
        ${ic("vol", 15)}
      </div>`;
  }
}

@customElement("app-root")
class AppRoot extends LitElement {
  static styles = [base, css`
    :host { display: flex; flex-direction: column; width: 1920px; height: 1080px; overflow: hidden; background: #e5e5e5; }
    .title { height: 27px; background: #2f2f2f; display: grid; grid-template-columns: 1fr auto 1fr; align-items: center; color: #dadada; font: bold 13.3px "Noto Sans", sans-serif; }
    .name { padding: 2px 0 0 1px; }
    .win { display: flex; justify-content: flex-end; align-items: center; padding: 0 10px 1px 0; }
    .min { width: 6px; height: 2px; background: #aaa; margin-right: 24px; }
    .max { margin-right: 19px; }
    .main { display: flex; height: 955px; }
    .center { width: 1378px; display: flex; flex-direction: column; }
  `];
  render() {
    return html`
      <div class="title"><span></span><span class="name">jeuteuf - Pencil</span>
        <div class="win"><i class="min"></i>
          <svg class="max" width="7" height="7" viewBox="0 0 7 7"><path d="M2.500 0H7v4.500zM0 2.500L4.500 7H0z" fill="#999"></path></svg>
          <svg width="14" height="14" viewBox="0 0 14 14"><circle cx="7" cy="7" r="7" fill="#94b575"></circle><path d="M4.500 4.500l5 5m0-5l-5 5" stroke="#222" stroke-width="1.800"></path></svg>
        </div>
      </div>
      <tool-bar></tool-bar>
      <div class="main">
        <shape-panel></shape-panel>
        <div class="center"><mockup-canvas></mockup-canvas><page-bar></page-bar></div>
        <props-panel></props-panel>
      </div>
      <task-bar></task-bar>`;
  }
}
